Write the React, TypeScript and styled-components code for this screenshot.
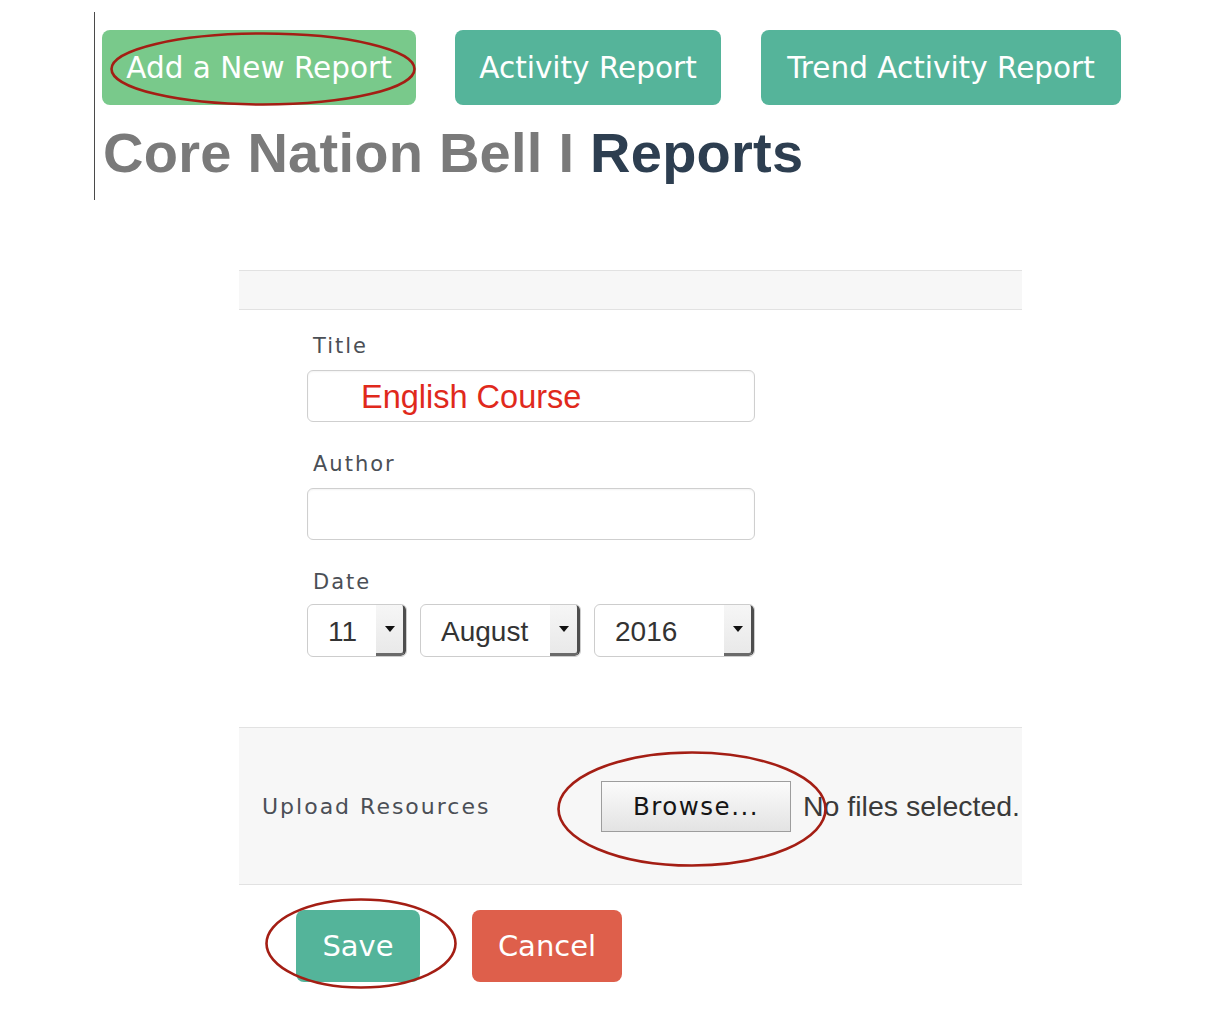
import React from "react";
import styled, { createGlobalStyle } from "styled-components";

const Global = createGlobalStyle`
  html, body { margin: 0; padding: 0; background: #ffffff; }
  body { font-family: "DejaVu Sans", "Liberation Sans", sans-serif; }
  * { box-sizing: border-box; }
`;

const Page = styled.div`
  width: 1222px;
  min-height: 1011px;
  padding-top: 12px;
`;

const Header = styled.header`
  margin-left: 94px;
  border-left: 1px solid #4a4a4a;
  padding: 18px 0 19px 7px;
`;

const ButtonRow = styled.nav`
  display: flex;
`;

const Anchor = styled.div<{ $gap?: number }>`
  position: relative;
  display: inline-flex;
  margin-right: ${(p) => p.$gap ?? 0}px;
`;

const NavButton = styled.button<{ $tone: "green" | "teal"; $w: number; $gap?: number }>`
  width: ${(p) => p.$w}px;
  height: 75px;
  margin-right: ${(p) => p.$gap ?? 0}px;
  padding: 0;
  border: none;
  border-radius: 8px;
  background: ${(p) => (p.$tone === "green" ? "#79c98b" : "#55b49a")};
  color: #ffffff;
  font-family: "DejaVu Sans", sans-serif;
  font-size: 29.5px;
  display: flex;
  align-items: center;
  justify-content: center;
  white-space: nowrap;
`;

const Heading = styled.h1`
  margin: 20px 0 0 1px;
  font-family: "Liberation Sans", Arial, sans-serif;
  font-weight: 700;
  font-size: 56px;
  line-height: 56px;
  letter-spacing: 0.25px;
  color: #7a7a7a;
  white-space: nowrap;
`;

const Accent = styled.span`
  color: #2d3e50;
`;

const Panel = styled.section`
  margin: 70px 0 0 239px;
  width: 783px;
`;

const Band = styled.div`
  height: 40px;
  background: #f7f7f7;
  border-top: 1px solid #e2e2e2;
  border-bottom: 1px solid #e2e2e2;
`;

const Form = styled.div`
  padding: 24px 0 70px 68px;
  display: flex;
  flex-direction: column;
`;

const Label = styled.label<{ $gap?: number }>`
  display: block;
  margin: 0 0 ${(p) => p.$gap ?? 12}px 6px;
  font-family: "DejaVu Sans", sans-serif;
  font-size: 21px;
  line-height: 24px;
  letter-spacing: 2px;
  color: #4b4f56;
`;

const TextBox = styled.div`
  width: 448px;
  height: 52px;
  border: 1px solid #cfcfcf;
  border-radius: 6px;
  box-shadow: inset 0 1px 2px rgba(0, 0, 0, 0.05);
  display: flex;
  align-items: center;
  padding-left: 53px;
  padding-top: 3px;
  margin-bottom: 30px;
  font-family: "Liberation Sans", Arial, sans-serif;
  font-size: 32.5px;
  color: #e0291c;
`;

const SelectRow = styled.div`
  display: flex;
  gap: 13px;
`;

const SelectBox = styled.div<{ $w: number }>`
  width: ${(p) => p.$w}px;
  height: 53px;
  border: 1px solid #cdcdcd;
  border-radius: 6px;
  display: flex;
  overflow: hidden;
  background: #ffffff;
`;

const SelectText = styled.span`
  flex: 1;
  display: flex;
  align-items: center;
  padding-left: 20px;
  padding-top: 2px;
  font-family: "Liberation Sans", Arial, sans-serif;
  font-size: 28px;
  color: #333333;
`;

const ArrowBox = styled.span`
  width: 30px;
  background: linear-gradient(#f6f6f6, #e9e9e9);
  border-right: 3px solid #4e4e4e;
  border-bottom: 3px solid #6a6a6a;
  border-radius: 0 4px 5px 0;
  display: flex;
  align-items: center;
  justify-content: center;
`;

const Upload = styled.div`
  height: 158px;
  background: #f7f7f7;
  border-top: 1px solid #e2e2e2;
  border-bottom: 1px solid #e2e2e2;
  display: flex;
  align-items: center;
  padding-left: 23px;
`;

const UploadLabel = styled.span`
  width: 339px;
  font-family: "DejaVu Sans", sans-serif;
  font-size: 22px;
  letter-spacing: 2px;
  color: #4b4f56;
  white-space: nowrap;
`;

const Browse = styled.button`
  width: 190px;
  height: 51px;
  border: 1px solid #9d9d9d;
  background: linear-gradient(#fbfbfb, #e3e3e3);
  font-family: "DejaVu Sans", sans-serif;
  font-size: 24.5px;
  letter-spacing: 1.5px;
  color: #151515;
  padding: 0;
`;

const FileNote = styled.span`
  margin-left: 12px;
  font-family: "Liberation Sans", Arial, sans-serif;
  font-size: 28.5px;
  color: #3a3a3a;
  white-space: nowrap;
`;

const Actions = styled.div`
  display: flex;
  gap: 52px;
  margin: 25px 0 0 57px;
`;

const ActionButton = styled.button<{ $tone: "save" | "cancel" }>`
  height: 72px;
  width: ${(p) => (p.$tone === "save" ? 124 : 150)}px;
  border: none;
  border-radius: 8px;
  background: ${(p) => (p.$tone === "save" ? "#54b49a" : "#de5f4b")};
  color: #ffffff;
  font-family: "DejaVu Sans", sans-serif;
  font-size: 29px;
  padding: 0;
`;

const Ring = styled.svg<{ $l: number; $t: number }>`
  position: absolute;
  left: ${(p) => p.$l}px;
  top: ${(p) => p.$t}px;
  overflow: visible;
  pointer-events: none;
`;

function Ellipse({ l, t, w, h }: { l: number; t: number; w: number; h: number }) {
  return (
    <Ring $l={l} $t={t} width={w} height={h} viewBox={`0 0 ${w} ${h}`}>
      <ellipse
        cx={w / 2}
        cy={h / 2}
        rx={w / 2 - 1.5}
        ry={h / 2 - 1.5}
        fill="none"
        stroke="#a41e14"
        strokeWidth={2.6}
      />
    </Ring>
  );
}

function Caret() {
  return (
    <svg width="10" height="6" viewBox="0 0 10 6">
      <polygon points="0,0 10,0 5,6" fill="#111" />
    </svg>
  );
}

function Select({ w, value }: { w: number; value: string }) {
  return (
    <SelectBox $w={w}>
      <SelectText>{value}</SelectText>
      <ArrowBox>
        <Caret />
      </ArrowBox>
    </SelectBox>
  );
}

export default function App() {
  return (
    <Page>
      <Global />
      <Header>
        <ButtonRow>
          <Anchor $gap={39}>
            <NavButton $tone="green" $w={314}>Add a New Report</NavButton>
            <Ellipse l={8} t={2} w={306} h={74} />
          </Anchor>
          <NavButton $tone="teal" $w={266} $gap={40}>Activity Report</NavButton>
          <NavButton $tone="teal" $w={360}>Trend Activity Report</NavButton>
        </ButtonRow>
        <Heading>
          Core Nation Bell I <Accent>Reports</Accent>
        </Heading>
      </Header>

      <Panel>
        <Band />
        <Form>
          <Label>Title</Label>
          <TextBox>English Course</TextBox>
          <Label>Author</Label>
          <TextBox />
          <Label $gap={10}>Date</Label>
          <SelectRow>
            <Select w={100} value="11" />
            <Select w={161} value="August" />
            <Select w={161} value="2016" />
          </SelectRow>
        </Form>
        <Upload>
          <UploadLabel>Upload Resources</UploadLabel>
          <Anchor>
            <Browse>Browse...</Browse>
            <Ellipse l={-44} t={-30} w={270} h={116} />
          </Anchor>
          <FileNote>No files selected.</FileNote>
        </Upload>
        <Actions>
          <Anchor>
            <ActionButton $tone="save">Save</ActionButton>
            <Ellipse l={-31} t={-12} w={192} h={91} />
          </Anchor>
          <ActionButton $tone="cancel">Cancel</ActionButton>
        </Actions>
      </Panel>
    </Page>
  );
}
